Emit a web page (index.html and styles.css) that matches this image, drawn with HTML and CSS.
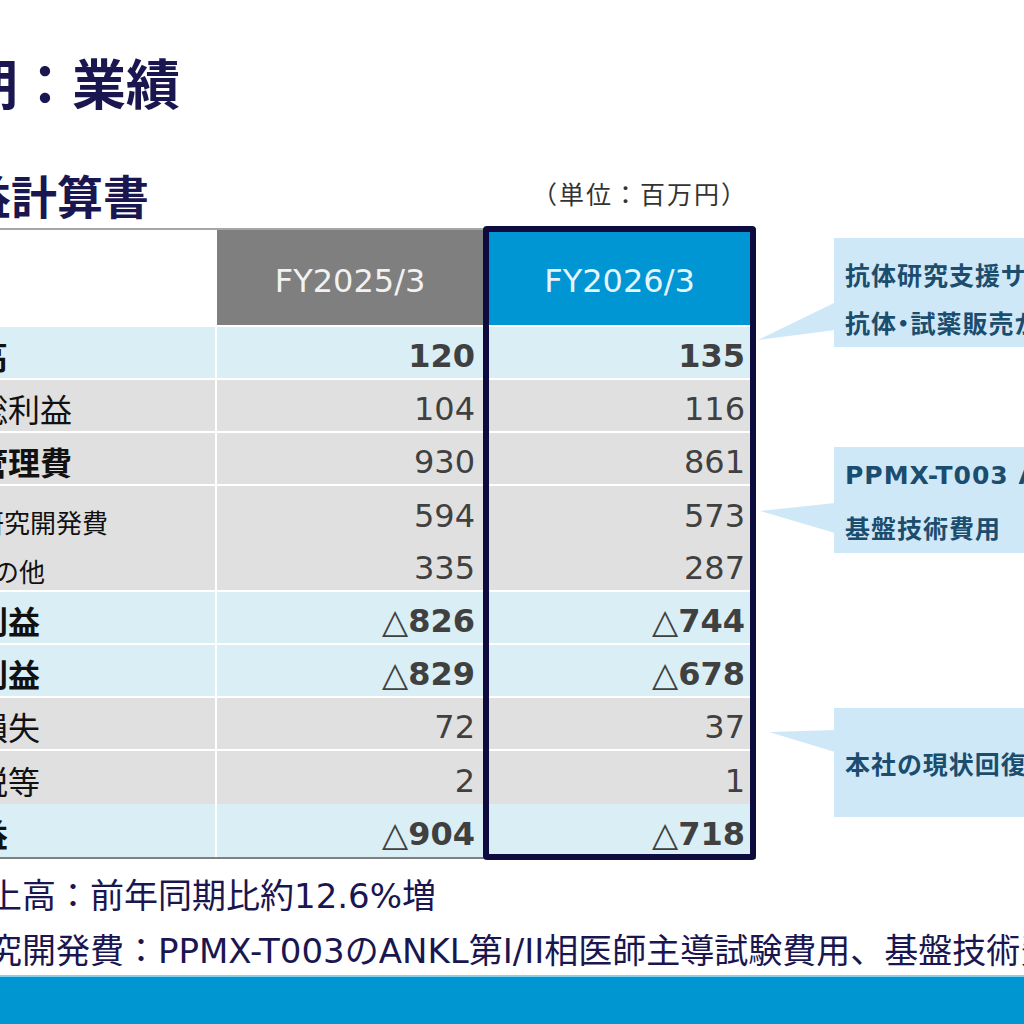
FILE: index.html
```html
<!DOCTYPE html>
<html lang="ja">
<head>
<meta charset="utf-8">
<title>業績</title>
<link rel="stylesheet" href="styles.css">
</head>
<body>
<div class="slide">
  <h1 class="title"><span>2026年3月期 第1四半期：業績</span></h1>
  <div class="main">
    <div class="left">
      <div class="subhead">
        <h2 class="subtitle"><span>損益計算書</span></h2>
        <div class="unit">（単位：百万円）</div>
      </div>
      <div class="plwrap">
        <div class="pl">
          <div class="c hl"></div>
          <div class="c h25">FY2025/3</div>
          <div class="c h26">FY2026/3</div>

          <div class="c lab b blue">売上高</div>
          <div class="c v v25 b blue">120</div>
          <div class="c v v26 b blue">135</div>

          <div class="c lab gray">売上総利益</div>
          <div class="c v v25 gray">104</div>
          <div class="c v v26 gray">116</div>

          <div class="c lab b gray">販売管理費</div>
          <div class="c v v25 gray">930</div>
          <div class="c v v26 gray">861</div>

          <div class="c lab sub sub1 gray nosep">研究開発費</div>
          <div class="c v v25 gray nosep">594</div>
          <div class="c v v26 gray nosep">573</div>

          <div class="c lab sub sub2 gray">その他</div>
          <div class="c v v25 gray">335</div>
          <div class="c v v26 gray">287</div>

          <div class="c lab b blue">営業利益</div>
          <div class="c v v25 b blue"><span class="tri">△</span>826</div>
          <div class="c v v26 b blue"><span class="tri">△</span>744</div>

          <div class="c lab b blue">経常利益</div>
          <div class="c v v25 b blue"><span class="tri">△</span>829</div>
          <div class="c v v26 b blue"><span class="tri">△</span>678</div>

          <div class="c lab gray">特別損失</div>
          <div class="c v v25 gray">72</div>
          <div class="c v v26 gray">37</div>

          <div class="c lab gray nosep">法人税等</div>
          <div class="c v v25 gray nosep">2</div>
          <div class="c v v26 gray nosep">1</div>

          <div class="c lab b blue nosep">純利益</div>
          <div class="c v v25 b blue nosep"><span class="tri">△</span>904</div>
          <div class="c v v26 b blue nosep"><span class="tri">△</span>718</div>
        </div>
        <div class="frame"></div>
      </div>
    </div>
    <div class="notes">
      <div class="call call1">
        <p>抗体研究支援サービス</p>
        <p>抗体・試薬販売が増加</p>
      </div>
      <div class="call call2">
        <p>PPMX-T003 ANKL第I/II相</p>
        <p>基盤技術費用</p>
      </div>
      <div class="call call3">
        <p>本社の現状回復費用</p>
      </div>
    </div>
  </div>
  <ul class="foot">
    <li>売上高：前年同期比約12.6%増</li>
    <li>研究開発費：PPMX-T003のANKL第I/II相医師主導試験費用、基盤技術費用</li>
  </ul>
</div>
<div class="band"></div>
</body>
</html>
```
FILE: styles.css
```css
html, body {
  margin: 0;
  padding: 0;
}
body {
  width: 1024px;
  height: 1024px;
  overflow: hidden;
  background: #ffffff;
  font-family: "Noto Sans CJK JP", sans-serif;
  display: flex;
  flex-direction: column;
}
.slide {
  flex: 1;
  min-height: 0;
  margin-left: -100px;
}
.title {
  display: flex;
  justify-content: flex-end;
  width: 280px;
  height: 60px;
  margin: 52px 0 0;
  font-size: 54px;
  line-height: 60px;
  font-weight: 700;
  color: #1a1650;
  white-space: nowrap;
}
.main {
  display: flex;
  align-items: flex-start;
}
.left {
  flex: none;
  width: 856px;
}
.subhead {
  display: flex;
  align-items: flex-end;
  height: 52px;
  margin-top: 56px;
}
.subtitle {
  flex: none;
  display: flex;
  justify-content: flex-end;
  width: 249px;
  margin: 0;
  font-size: 46px;
  line-height: 52px;
  font-weight: 700;
  color: #1a1650;
  white-space: nowrap;
}
.unit {
  margin-left: auto;
  margin-right: 8px;
  margin-bottom: 14px;
  font-size: 25px;
  line-height: 25px;
  letter-spacing: 2px;
  color: #333333;
  white-space: nowrap;
}
.plwrap {
  display: grid;
  margin-top: 8px;
}
.pl {
  grid-area: 1 / 1;
  display: grid;
  grid-template-columns: 317px 266px 273px;
  grid-template-rows: 97px repeat(10, 53px);
  border-top: 2px solid #a6a6a6;
  border-bottom: 2px solid #808080;
}
.frame {
  grid-area: 1 / 1;
  width: 273px;
  margin: -2px 0 -1px 583px;
  box-sizing: border-box;
  border: 6px solid #0e0b3e;
  border-radius: 4px;
}
.c {
  display: flex;
  align-items: center;
  box-sizing: border-box;
  border-bottom: 2px solid #ffffff;
  white-space: nowrap;
}
.nosep {
  border-bottom: 0;
}
.hl {
  background: #ffffff;
  border-right: 2px solid #ffffff;
}
.h25, .h26 {
  justify-content: center;
  padding-top: 6px;
  font-family: "DejaVu Sans", sans-serif;
  font-size: 32px;
}
.h25 {
  background: #7f7f7f;
  color: #f2f2f2;
}
.h26 {
  background: #0096d3;
  color: #e6f5fc;
}
.blue {
  background: #d9eff5;
}
.gray {
  background: #e0e0e0;
}
.lab {
  padding-left: 12px;
  padding-top: 4px;
  border-right: 2px solid #ffffff;
  font-size: 32px;
  color: #111111;
}
.sub {
  font-size: 26px;
}
.sub1 {
  padding-left: 78px;
  padding-top: 18px;
}
.sub2 {
  padding-left: 67px;
  padding-top: 12px;
}
.b {
  font-weight: 700;
}
.v {
  justify-content: flex-end;
  padding-top: 6px;
  font-family: "DejaVu Sans", sans-serif;
  font-size: 32px;
  color: #404040;
}
.v25 {
  padding-right: 8px;
}
.v26 {
  padding-right: 11px;
}
.tri {
  font-weight: 400;
  font-size: 34px;
}
.notes {
  flex: none;
  display: flex;
  flex-direction: column;
  width: 260px;
  margin-left: 78px;
}
.call {
  position: relative;
  display: flex;
  flex-direction: column;
  justify-content: center;
  box-sizing: border-box;
  padding: 6px 0 0 11px;
  background: #cfe8f7;
  color: #1b4d6e;
  font-family: "DejaVu Sans", "Noto Sans CJK JP", sans-serif;
  font-weight: 700;
  font-size: 25px;
  letter-spacing: 1px;
  white-space: nowrap;
  font-feature-settings: "palt";
}
.call p {
  margin: 0;
}
.call::before {
  content: "";
  position: absolute;
  background: #cfe8f7;
}
.call1 {
  margin-top: 126px;
  height: 109px;
  line-height: 48px;
  padding-top: 16px;
}
.call1::before {
  left: -76px;
  top: 65px;
  width: 77px;
  height: 38px;
  clip-path: polygon(76px 0, 77px 0, 77px 27px, 0 37px);
}
.call2 {
  margin-top: 100px;
  height: 106px;
  line-height: 54px;
}
.call2::before {
  left: -74px;
  top: 56px;
  width: 75px;
  height: 30px;
  clip-path: polygon(0 8px, 75px 0, 75px 30px);
}
.call3 {
  margin-top: 155px;
  height: 109px;
  line-height: 48px;
}
.call3::before {
  left: -65px;
  top: 22px;
  width: 66px;
  height: 22px;
  clip-path: polygon(0 2px, 66px 0, 66px 22px);
}
.foot {
  list-style: none;
  margin: 10px 0 0;
  padding: 0 0 0 54px;
  font-family: "DejaVu Sans", "Noto Sans CJK JP", sans-serif;
  font-size: 34px;
  line-height: 55px;
  color: #1a1650;
  white-space: nowrap;
}
.band {
  flex: none;
  height: 49px;
  box-sizing: border-box;
  background: #0096d1;
  border-top: 2px solid #86cfee;
}
```
